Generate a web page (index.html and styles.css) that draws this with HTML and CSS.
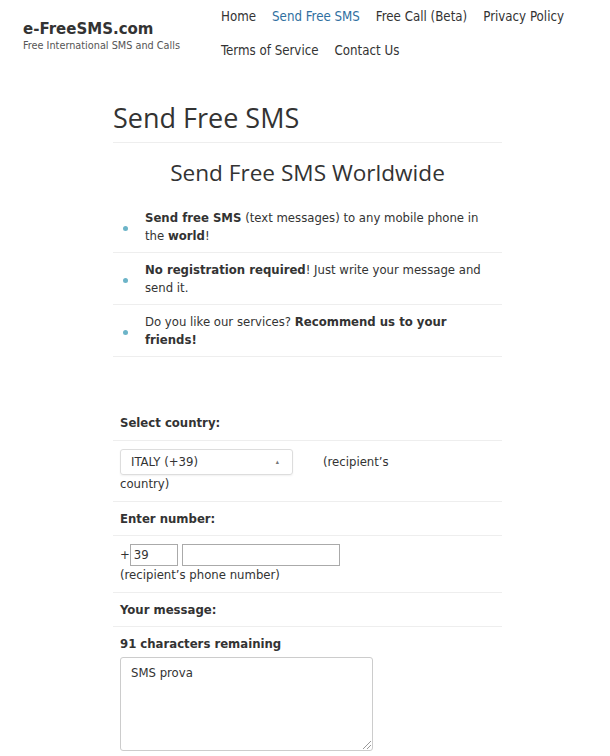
FILE: index.html
```html
<!DOCTYPE html>
<html lang="en">
<head>
<meta charset="utf-8">
<title>Send Free SMS - e-FreeSMS.com</title>
<link rel="stylesheet" href="styles.css">
</head>
<body>
<header class="site-header">
  <div class="brand">
    <div class="brand-name">e-FreeSMS.com</div>
    <div class="brand-tag">Free International SMS and Calls</div>
  </div>
  <nav class="nav">
    <a class="nav-link" href="#">Home</a>
    <a class="nav-link active" href="#">Send Free SMS</a>
    <a class="nav-link" href="#">Free Call (Beta)</a>
    <a class="nav-link" href="#">Privacy Policy</a>
    <a class="nav-link" href="#">Terms of Service</a>
    <a class="nav-link" href="#">Contact Us</a>
  </nav>
</header>

<main class="main">
  <h1 class="page-title">Send Free SMS</h1>
  <h2 class="sub-title">Send Free SMS Worldwide</h2>
  <ul class="features">
    <li class="feature"><span class="dot"></span><span class="feature-text"><b>Send free SMS</b> (text messages) to any mobile phone in the <b>world</b>!</span></li>
    <li class="feature"><span class="dot"></span><span class="feature-text"><b>No registration required</b>! Just write your message and send it.</span></li>
    <li class="feature"><span class="dot"></span><span class="feature-text">Do you like our services? <b>Recommend us to your friends!</b></span></li>
  </ul>

  <form class="sms-form">
    <div class="row first label">Select country:</div>
    <div class="row tall">
      <span class="select"><span class="select-value">ITALY (+39)</span><span class="select-arrow">&#9652;</span></span><span class="hint-inline">(recipient’s</span><br>country)
    </div>
    <div class="row label">Enter number:</div>
    <div class="row tall">
      <div class="phone">+<span class="input prefix">39</span><span class="input number"></span></div>
      <div>(recipient’s phone number)</div>
    </div>
    <div class="row label">Your message:</div>
    <div class="row">
      <div class="remaining label">91 characters remaining</div>
      <div class="textarea">SMS prova<span class="grip"></span></div>
    </div>
  </form>
</main>
</body>
</html>
```
FILE: styles.css
```css
html, body {
  margin: 0;
  padding: 0;
  background: #fff;
}
body {
  font-family: "DejaVu Sans Condensed", "DejaVu Sans", sans-serif;
  font-size: 13px;
  line-height: 18px;
  color: #333;
}
.site-header {
  display: flex;
  align-items: flex-start;
  padding: 8px 0 0 23px;
}
.brand {
  width: 198px;
  padding-top: 12px;
}
.brand-name {
  font-family: "DejaVu Sans", sans-serif;
  font-weight: bold;
  font-size: 15px;
  line-height: 18px;
  color: #333;
}
.brand-tag {
  font-size: 10.8px;
  line-height: 14px;
  color: #555;
  margin-top: 1px;
}
.nav {
  display: flex;
  flex-wrap: wrap;
  width: 385px;
  column-gap: 16px;
  row-gap: 16px;
}
.nav-link {
  font-size: 13.2px;
  line-height: 18px;
  color: #333;
  text-decoration: none;
}
.nav-link.active {
  color: #2f6f9f;
}
.main {
  width: 389px;
  margin: 40px 0 0 113px;
}
.page-title {
  font-family: "Open Sans", sans-serif;
  font-weight: 400;
  font-size: 27px;
  line-height: 36px;
  margin: 0;
  padding-bottom: 6px;
  border-bottom: 1px solid #eee;
}
.sub-title {
  font-family: "Open Sans", sans-serif;
  font-weight: 400;
  font-size: 22.6px;
  line-height: 30px;
  text-align: center;
  margin: 15px 0 0;
}
.features {
  list-style: none;
  margin: 13px 0 0;
  padding: 0;
}
.feature {
  display: flex;
  align-items: center;
  padding: 8px 10px 7px 10px;
  border-bottom: 1px solid #eee;
}
.dot {
  width: 5px;
  height: 5px;
  border-radius: 50%;
  background: #6cb4c8;
  flex: none;
  margin-right: 17px;
  margin-top: 2px;
}
.sms-form {
  margin-top: 49px;
}
.row {
  padding: 8px 7px 7px;
  border-top: 1px solid #eee;
}
.row.first {
  border-top: none;
  padding-bottom: 8px;
}
.row.tall {
  padding-bottom: 8px;
}
.label {
  font-weight: bold;
}
.select {
  display: inline-flex;
  align-items: center;
  justify-content: space-between;
  box-sizing: border-box;
  width: 173px;
  height: 26px;
  padding: 0 13px 0 10px;
  border: 1px solid #ddd;
  border-radius: 3px;
  box-shadow: 0 1px 2px rgba(0,0,0,0.06);
  font-size: 13px;
  vertical-align: middle;
}
.select-arrow {
  font-size: 7px;
  color: #777;
}
.hint-inline {
  margin-left: 30px;
  vertical-align: middle;
}
.phone {
  display: flex;
  align-items: center;
}
.input {
  display: inline-block;
  box-sizing: border-box;
  height: 22px;
  border: 1px solid #aaa;
  line-height: 20px;
  padding: 0 3px;
}
.prefix {
  width: 48px;
}
.number {
  width: 158px;
  margin-left: 4px;
}
.remaining {
  margin-bottom: 4px;
}
.textarea {
  position: relative;
  box-sizing: border-box;
  width: 253px;
  height: 94px;
  border: 1px solid #ccc;
  border-radius: 3px;
  padding: 6px 10px;
}
.grip {
  position: absolute;
  right: 1px;
  bottom: 1px;
  width: 8px;
  height: 8px;
  background: linear-gradient(135deg, transparent 45%, #999 45%, #999 52%, transparent 52%, transparent 70%, #999 70%, #999 77%, transparent 77%);
}
```
